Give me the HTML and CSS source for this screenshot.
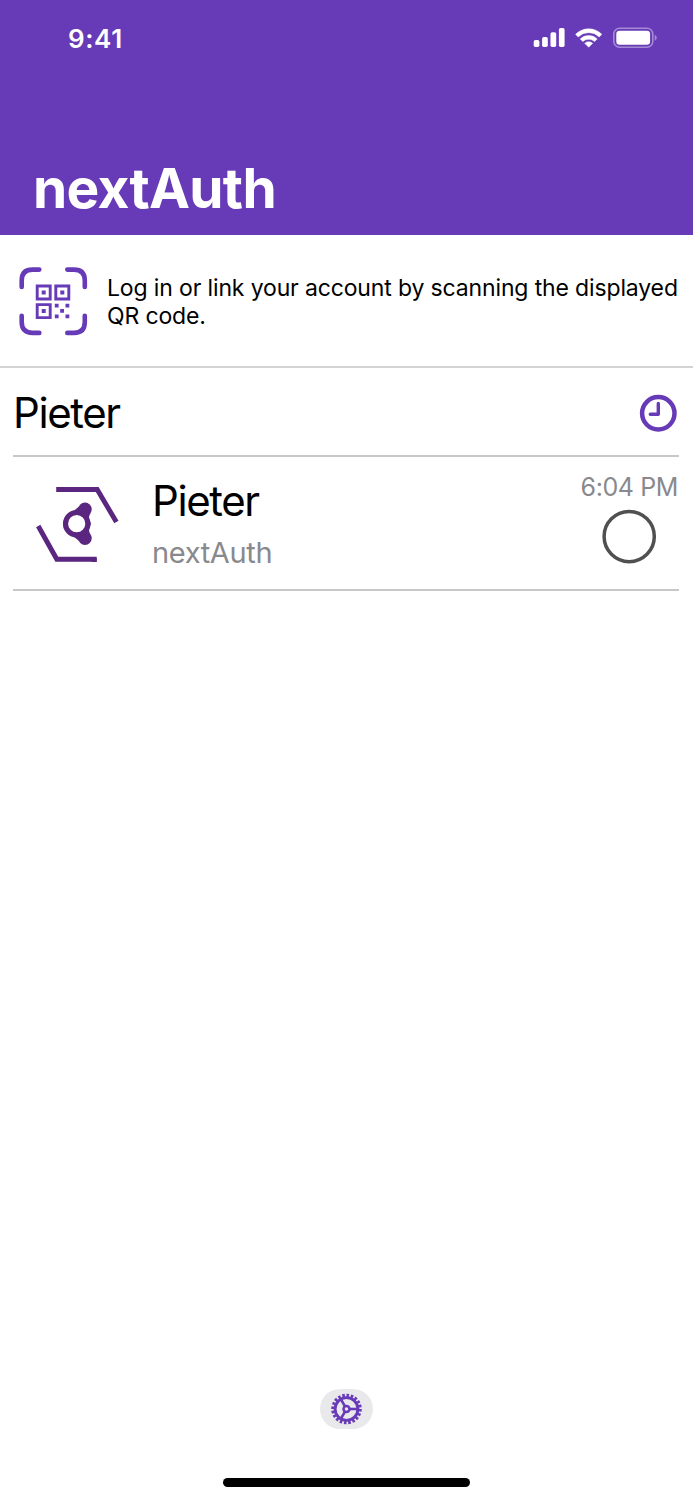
FILE: index.html
```
<!DOCTYPE html>
<html lang="en">
<head>
<meta charset="utf-8">
<title>nextAuth</title>
<link rel="stylesheet" href="styles.css">
</head>
<body>
<div class="screen">
  <header class="header">
    <div class="status">
      <span class="clock">9:41</span>
      <svg class="status-icons" width="126" height="24" viewBox="0 0 126 24" fill="#fff">
        <rect x="3.7" y="14" width="5.7" height="6.9" rx="1.7"/>
        <rect x="12.1" y="11" width="5.7" height="9.900" rx="1.700"/>
        <rect x="20.500" y="6.200" width="5.700" height="14.700" rx="1.700"/>
        <rect x="28.900" y="2" width="5.700" height="18.900" rx="1.700"/>
        <path d="M45.600 8.300A18.500 18.500 0 0 1 71.800 8.300L69.200 11A14.800 14.800 0 0 0 48.200 11ZM50.200 12.900A12.100 12.100 0 0 1 67.200 12.900L64.600 15.600A8.500 8.500 0 0 0 52.800 15.600ZM54.700 17.200A5.900 5.900 0 0 1 62.700 17.200L58.700 21.200Z" stroke="#fff" stroke-width=".5" stroke-linejoin="round"/>
        <rect x="83.800" y="2.300" width="39" height="18.900" rx="5.800" fill="none" stroke="#a489d3" stroke-width="1.600"/>
        <rect x="86.300" y="4.700" width="33.800" height="14.100" rx="3.300"/>
        <path d="M124.700 8.800Q126.800 9.800 126.800 11.800T124.700 14.900Z" fill="#a489d3"/>
      </svg>
    </div>
    <h1 class="title">nextAuth</h1>
  </header>
  <section class="scan">
    <svg class="scan-icon" width="70" height="70" viewBox="0.5 0.5 70 70" fill="none" stroke="#673ab7">
      <path stroke-width="4.600" stroke-linecap="round" d="M3.200 20.400V14Q3.200 3.100 14 3.100H20.800M48.800 3.100H55.500Q66.300 3.100 66.300 14V20.400M66.300 49.200V55.500Q66.300 66.400 55.500 66.400H48.800M20.800 66.400H14Q3.200 66.400 3.200 55.500V49.200"/>
      <path stroke-width="2.900" d="M18.700 19.500H31.700V32.500H18.700ZM37.300 19.500H50.300V32.500H37.300ZM18.700 38.100H31.700V51.100H18.700Z"/>
      <path fill="#673ab7" stroke="none" d="M23.200 24h4v4h-4zM41.800 24h4v4h-4zM23.200 42.600h4v4h-4zM36.300 37.200h3.800v3.800h-3.800zM47 37.200h3.800v3.800h-3.800zM41.700 42.500h3.800v3.800h-3.800zM36.300 48h3.800v3.800h-3.800zM47 48h3.800v3.800h-3.800z"/>
    </svg>
    <p class="scan-text">Log in or link your account by scanning the displayed<br>QR code.</p>
  </section>
  <main class="accounts">
    <div class="group">
      <h2 class="name">Pieter</h2>
      <svg class="history" width="38" height="38" viewBox="-0.3 -0.3 38 38" fill="none" stroke="#673ab7">
        <circle cx="19" cy="19" r="16.200" stroke-width="4.500"/>
        <path d="M19 9.200V19.900H11" stroke-width="3.400" stroke-linecap="round" stroke-linejoin="round"/>
      </svg>
    </div>
    <div class="account">
      <svg class="logo" width="84" height="78" viewBox="0 0 84 78" fill="none" stroke="#5a267f">
        <path stroke-width="4.900" d="M20.200 4.500H61.200L80.400 37M2.200 41L20.800 74.200H60.700"/>
        <g fill="#5a267f" stroke="none">
          <path d="M55.500 73h5.200v4h-5.200zM37 26.500L43 21.500L54.500 28Q52.800 31 53 34L55 38.700L53 43.500Q52.800 47 54.500 50L43 56L37 51Z"/>
          <circle cx="49" cy="24.200" r="6.700"/>
          <circle cx="49" cy="53.300" r="6.700"/>
        </g>
        <circle cx="40.700" cy="38.700" r="11.200" fill="#fff" stroke-width="5.200"/>
      </svg>
      <div class="details">
        <div class="name">Pieter</div>
        <div class="service">nextAuth</div>
      </div>
      <div class="session">
        <span class="time">6:04 PM</span>
        <svg class="radio" width="54" height="54" viewBox="0 0 54 54" fill="none" stroke="#505050">
          <circle cx="27.200" cy="26.600" r="25.100" stroke-width="3.500"/>
        </svg>
      </div>
    </div>
  </main>
  <footer class="footer">
    <div class="settings">
      <svg width="31" height="32" viewBox="0.5 0 31 32" fill="none" stroke="#673ab7">
        <circle cx="16" cy="16" r="13.700" stroke-width="3.200" pathLength="40" stroke-dasharray="1.200 .8"/>
        <circle cx="16" cy="16" r="11.400" stroke-width="2.900"/>
        <circle cx="16" cy="16" r="3" stroke-width="2.500"/>
        <path stroke-width="2.600" d="M19 16H28M14.500 13.400L10 5.600M14.500 18.600L10 26.400"/>
      </svg>
    </div>
    <div class="home-bar"></div>
  </footer>
</div>
</body>
</html>
```
FILE: styles.css
```
* { box-sizing: border-box; }
body { margin: 0; background: #fff; color: #000; font-family: Inter, "Liberation Sans", sans-serif; }
h1, h2, p { margin: 0; }
svg { display: block; flex: none; overflow: visible; }
.screen { width: 693px; height: 1500px; display: flex; flex-direction: column; }
.header { height: 235px; background: #673ab7; color: #fff; display: flex; flex-direction: column; justify-content: space-between; padding: 23px 37px 12px 33px; }
.status { height: 32px; display: flex; align-items: center; justify-content: space-between; padding-left: 35px; }
.clock { font-size: 26px; line-height: 32px; font-weight: 600; letter-spacing: 0.6px; }
.status-icons { margin-top: -2px; }
.title { font-size: 55px; line-height: 70px; font-weight: 700; letter-spacing: -0.7px; }
.scan { height: 133px; border-bottom: 2px solid #d4d4d4; display: flex; align-items: center; gap: 18px; padding: 3px 0 0 19px; }
.scan-text { font-size: 23px; line-height: 28px; white-space: nowrap; letter-spacing: -0.14px; }
.accounts { padding: 0 14px 0 13px; }
.group { height: 89px; border-bottom: 2px solid #c8c8c8; display: flex; align-items: center; justify-content: space-between; padding: 3px 2px 0 0; }
.name { font-size: 42px; line-height: 52px; font-weight: 400; letter-spacing: -1.4px; }
.account { height: 134px; border-bottom: 2px solid #c8c8c8; display: flex; align-items: flex-start; padding: 18px 1px 0 23px; }
.logo { margin-top: 10px; }
.details { flex: 1; padding-left: 32px; }
.service { margin-top: 7px; font-size: 29px; line-height: 38px; color: #89898d; letter-spacing: -0.35px; }
.session { display: flex; flex-direction: column; align-items: flex-end; }
.time { margin-top: -4px; font-size: 25px; line-height: 32px; color: #89898d; letter-spacing: -0.4px; }
.radio { margin: 7px 22px 0 0; }
.footer { margin-top: auto; display: flex; flex-direction: column; align-items: center; padding-bottom: 13px; }
.settings { width: 53px; height: 40px; border-radius: 20px; background: #e9e8eb; display: flex; align-items: center; justify-content: center; }
.home-bar { width: 247px; height: 9px; margin-top: 49px; border-radius: 5px; background: #000; }
```
